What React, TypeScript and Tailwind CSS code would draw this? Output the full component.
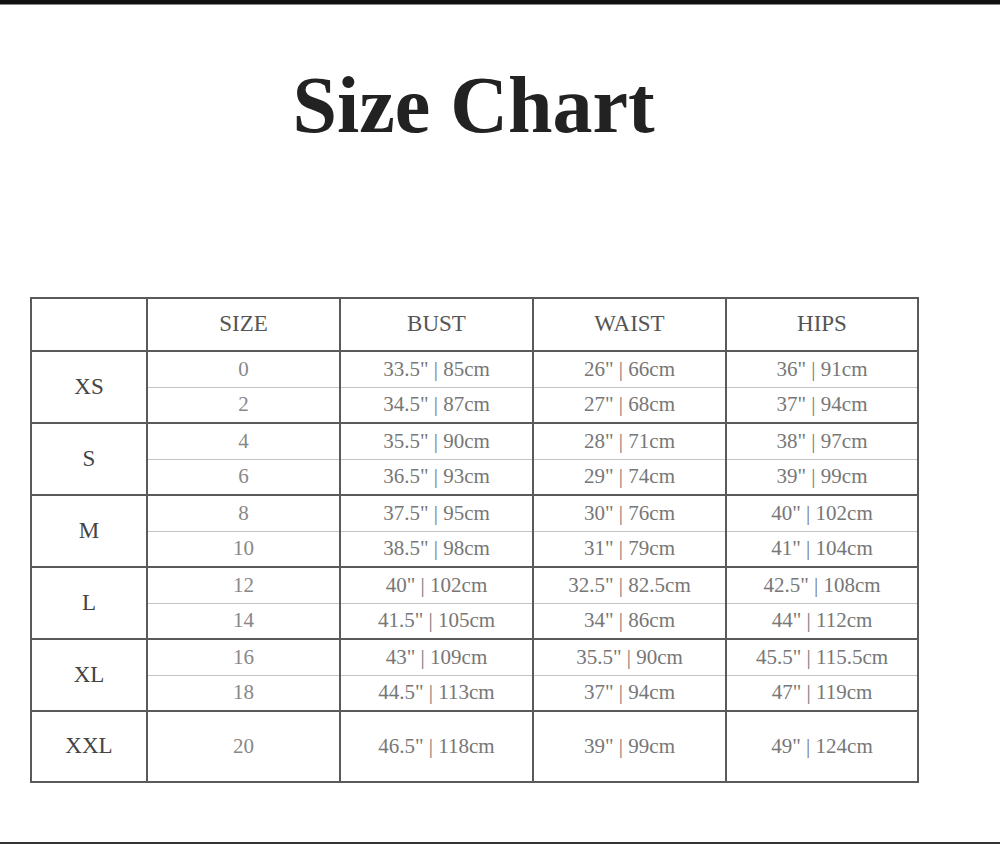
const ROWS = [
  {
    label: "XS",
    items: [
      ["0", '33.5" | 85cm', '26" | 66cm', '36" | 91cm'],
      ["2", '34.5" | 87cm', '27" | 68cm', '37" | 94cm'],
    ],
  },
  {
    label: "S",
    items: [
      ["4", '35.5" | 90cm', '28" | 71cm', '38" | 97cm'],
      ["6", '36.5" | 93cm', '29" | 74cm', '39" | 99cm'],
    ],
  },
  {
    label: "M",
    items: [
      ["8", '37.5" | 95cm', '30" | 76cm', '40" | 102cm'],
      ["10", '38.5" | 98cm', '31" | 79cm', '41" | 104cm'],
    ],
  },
  {
    label: "L",
    items: [
      ["12", '40" | 102cm', '32.5" | 82.5cm', '42.5" | 108cm'],
      ["14", '41.5" | 105cm', '34" | 86cm', '44" | 112cm'],
    ],
  },
  {
    label: "XL",
    items: [
      ["16", '43" | 109cm', '35.5" | 90cm', '45.5" | 115.5cm'],
      ["18", '44.5" | 113cm', '37" | 94cm', '47" | 119cm'],
    ],
  },
  {
    label: "XXL",
    items: [["20", '46.5" | 118cm', '39" | 99cm', '49" | 124cm']],
  },
];

const HEADERS = ["SIZE", "BUST", "WAIST", "HIPS"];

export default function App() {
  return (
    <div
      className="relative h-[844px] w-[1000px] overflow-hidden bg-white"
      style={{ fontFamily: "'Liberation Serif', 'DejaVu Serif', serif" }}
    >
      <div className="h-[4px] bg-[#111]" />
      <div className="h-[1px] bg-[#888]" />

      <div className="ml-[30px] w-[887px]">
        <h1 className="mt-[60px] text-center text-[80px] font-bold leading-none text-[#222]">
          Size Chart
        </h1>

        <table className="mt-[152px] w-[887px] table-fixed border-collapse border-2 border-[#5a5a5a]">
          <colgroup>
            <col className="w-[116px]" />
            <col className="w-[193px]" />
            <col className="w-[193px]" />
            <col className="w-[193px]" />
            <col className="w-[192px]" />
          </colgroup>
          <thead>
            <tr className="h-[53px]">
              <th className="border-2 border-[#5a5a5a]" />
              {HEADERS.map((h) => (
                <th
                  key={h}
                  className="border-2 border-[#5a5a5a] text-center text-[23px] font-normal text-[#555]"
                >
                  {h}
                </th>
              ))}
            </tr>
          </thead>
          <tbody>
            {ROWS.map((group) =>
              group.items.map((item, i) => {
                const single = group.items.length === 1;
                const last = i === group.items.length - 1;
                return (
                  <tr
                    key={group.label + item[0]}
                    className={single ? "h-[71px]" : "h-[36px]"}
                  >
                    {i === 0 && (
                      <td
                        rowSpan={group.items.length}
                        className="border-2 border-[#5a5a5a] text-center text-[23px] text-[#444]"
                      >
                        {group.label}
                      </td>
                    )}
                    {item.map((v, j) => (
                      <td
                        key={j}
                        className={`border-x-2 border-x-[#5a5a5a] p-0 text-center text-[21px] leading-none ${
                          j === 0 ? "text-[#888]" : "text-[#777]"
                        } ${
                          last
                            ? "border-b-2 border-b-[#5a5a5a]"
                            : "border-b border-b-[#c4c4c4]"
                        } ${i === 0 ? "border-t-2 border-t-[#5a5a5a]" : ""}`}
                      >
                        {v}
                      </td>
                    ))}
                  </tr>
                );
              })
            )}
          </tbody>
        </table>
      </div>

      <div className="absolute bottom-0 left-0 h-[2px] w-full bg-[#333]" />
    </div>
  );
}
